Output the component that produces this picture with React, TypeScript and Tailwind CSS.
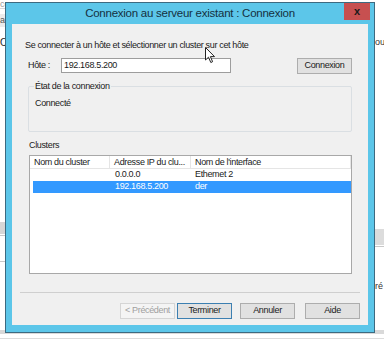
import React from "react";

const font = { fontFamily: '"Liberation Sans", Arial, sans-serif' };

function WinButton({
  label,
  variant = "normal",
}: {
  label: string;
  variant?: "normal" | "default" | "disabled";
}) {
  const border =
    variant === "default"
      ? "border-[#3c7fb1]"
      : variant === "disabled"
      ? "border-[#d5d5d5]"
      : "border-[#adadad]";
  const bg = variant === "disabled" ? "bg-[#f4f4f4]" : "bg-[#e1e1e1]";
  const text = variant === "disabled" ? "text-[#a0a0a0]" : "text-[#1a1a1a]";
  return (
    <div
      className={`flex h-[16px] w-[55px] items-center justify-center border ${border} ${bg} ${text} text-[9px] tracking-[-0.35px]`}
    >
      {label}
    </div>
  );
}

export default function App() {
  return (
    <div
      className="relative h-[345px] w-[384px] overflow-hidden bg-white text-[#1a1a1a]"
      style={font}
    >
      {/* desktop behind the dialog */}
      <div className="absolute left-0 top-0 h-[9px] w-[20px] border-b border-[#d8d8d8] text-[9px] leading-[9px] text-[#9a9a9a]">
        co
      </div>
      <div className="absolute left-0 top-[14px] h-[13px] w-[20px] bg-[#ececec] text-[9px] leading-[13px] text-[#555]">
        ai
      </div>
      <div className="absolute left-0 top-[37px] text-[10px] leading-[12px] text-[#222]">
        Ol
      </div>
      <div className="absolute left-0 top-[222px] h-[12px] w-[10px] bg-[#d6d6d6]" />
      <div className="absolute left-0 top-[235px] h-[27px] w-[10px] border-y border-[#c8c8c8] bg-white" />
      <div className="absolute left-0 top-[330px] h-[4px] w-[384px] bg-[#d9d9d9]" />
      <div className="absolute left-0 top-[338px] h-[1px] w-[384px] bg-[#dcdcdc]" />
      <div className="absolute right-0 top-[37px] w-[9px] text-[9px] leading-[10px] text-[#333]">
        ou
      </div>
      <div className="absolute right-0 top-[229px] h-[16px] w-[10px] bg-[#dcdcdc]" />
      <div className="absolute right-0 top-[246px] h-[1px] w-[10px] bg-[#c8c8c8]" />
      <div className="absolute right-0 top-[281px] w-[9px] text-[9px] leading-[10px] text-[#333]">
        ré
      </div>

      {/* dialog window */}
      <div className="absolute left-[5px] top-[2px] flex h-[331px] w-[370px] flex-col border border-[#3d6a80] bg-[#5cc6e9]">
        <div className="relative flex h-[21px] items-center justify-center">
          <span className="text-[11.5px] tracking-[-0.25px] text-[#15303f]">
            Connexion au serveur existant : Connexion
          </span>
          <div className="absolute right-[4px] top-0 flex h-[17px] w-[26px] items-center justify-center bg-[#c75050] text-[11px] font-bold text-[#1a1a1a]">
            x
          </div>
        </div>

        <div className="mx-[6px] mb-[7px] flex flex-1 flex-col bg-[#f0f0f0] text-[9px] tracking-[-0.35px]">
          <div className="px-[16px]">
            <p className="ml-[-3px] mt-[16px] h-[11px] leading-[11px]">
              Se connecter à un hôte et sélectionner un cluster sur cet hôte
            </p>

            <div className="mt-[7px] flex h-[15px] items-center">
              <span className="w-[33px]">Hôte :</span>
              <div className="flex h-[15px] w-[170px] items-center border border-[#9d9d9d] bg-white px-[2px]">
                192.168.5.200
              </div>
              <div className="ml-auto">
                <WinButton label="Connexion" />
              </div>
            </div>

            <div className="relative mt-[13px] h-[46px] rounded-[2px] border border-[#dadfe3]">
              <span className="absolute left-[5px] top-[-6px] bg-[#f0f0f0] px-[1px] leading-[11px]">
                État de la connexion
              </span>
              <span className="absolute left-[6px] top-[11px] leading-[11px]">
                Connecté
              </span>
            </div>

            <p className="mt-[8px] h-[11px] pl-[1px] leading-[11px]">Clusters</p>

            <div className="mt-[4px] ml-[1px] h-[119px] border border-[#a8a8a8] bg-white">
              <div className="flex h-[13px] border-b border-[#e5e5e5]">
                <div className="w-[80px] border-r border-[#e5e5e5] pl-[4px] leading-[13px]">
                  Nom du cluster
                </div>
                <div className="w-[81px] border-r border-[#e5e5e5] pl-[4px] leading-[13px]">
                  Adresse IP du clu...
                </div>
                <div className="flex-1 border-r border-[#e5e5e5] pl-[4px] leading-[13px]">
                  Nom de l'interface
                </div>
              </div>
              <div className="ml-[3px] flex h-[12px] items-center">
                <div className="w-[77px]" />
                <div className="w-[81px] pl-[5px]">0.0.0.0</div>
                <div className="pl-[4px]">Ethemet 2</div>
              </div>
              <div className="ml-[3px] flex h-[12px] items-center bg-[#3399ff] text-white">
                <div className="w-[77px]" />
                <div className="w-[81px] pl-[5px]">192.168.5.200</div>
                <div className="pl-[4px]">der</div>
              </div>
            </div>
          </div>

          <div className="mx-[8px] mt-[18px] h-[1px] bg-[#cfcfcf]" />

          <div className="mt-[10px] flex justify-end pr-[8px]">
            <WinButton label="< Précédent" variant="disabled" />
            <div className="w-[2px]" />
            <WinButton label="Terminer" variant="default" />
            <div className="w-[8px]" />
            <WinButton label="Annuler" />
            <div className="w-[10px]" />
            <WinButton label="Aide" />
          </div>
        </div>
      </div>

      {/* mouse cursor */}
      <svg
        className="absolute left-[205px] top-[47px]"
        width="11"
        height="17"
        viewBox="0 0 11 17"
      >
        <path
          d="M0.5 0.5 L0.5 13 L3.5 10.2 L5.8 15.5 L7.6 14.7 L5.4 9.6 L9.5 9.6 Z"
          fill="white"
          stroke="#222"
          strokeWidth="1"
          strokeLinejoin="round"
        />
      </svg>
    </div>
  );
}
